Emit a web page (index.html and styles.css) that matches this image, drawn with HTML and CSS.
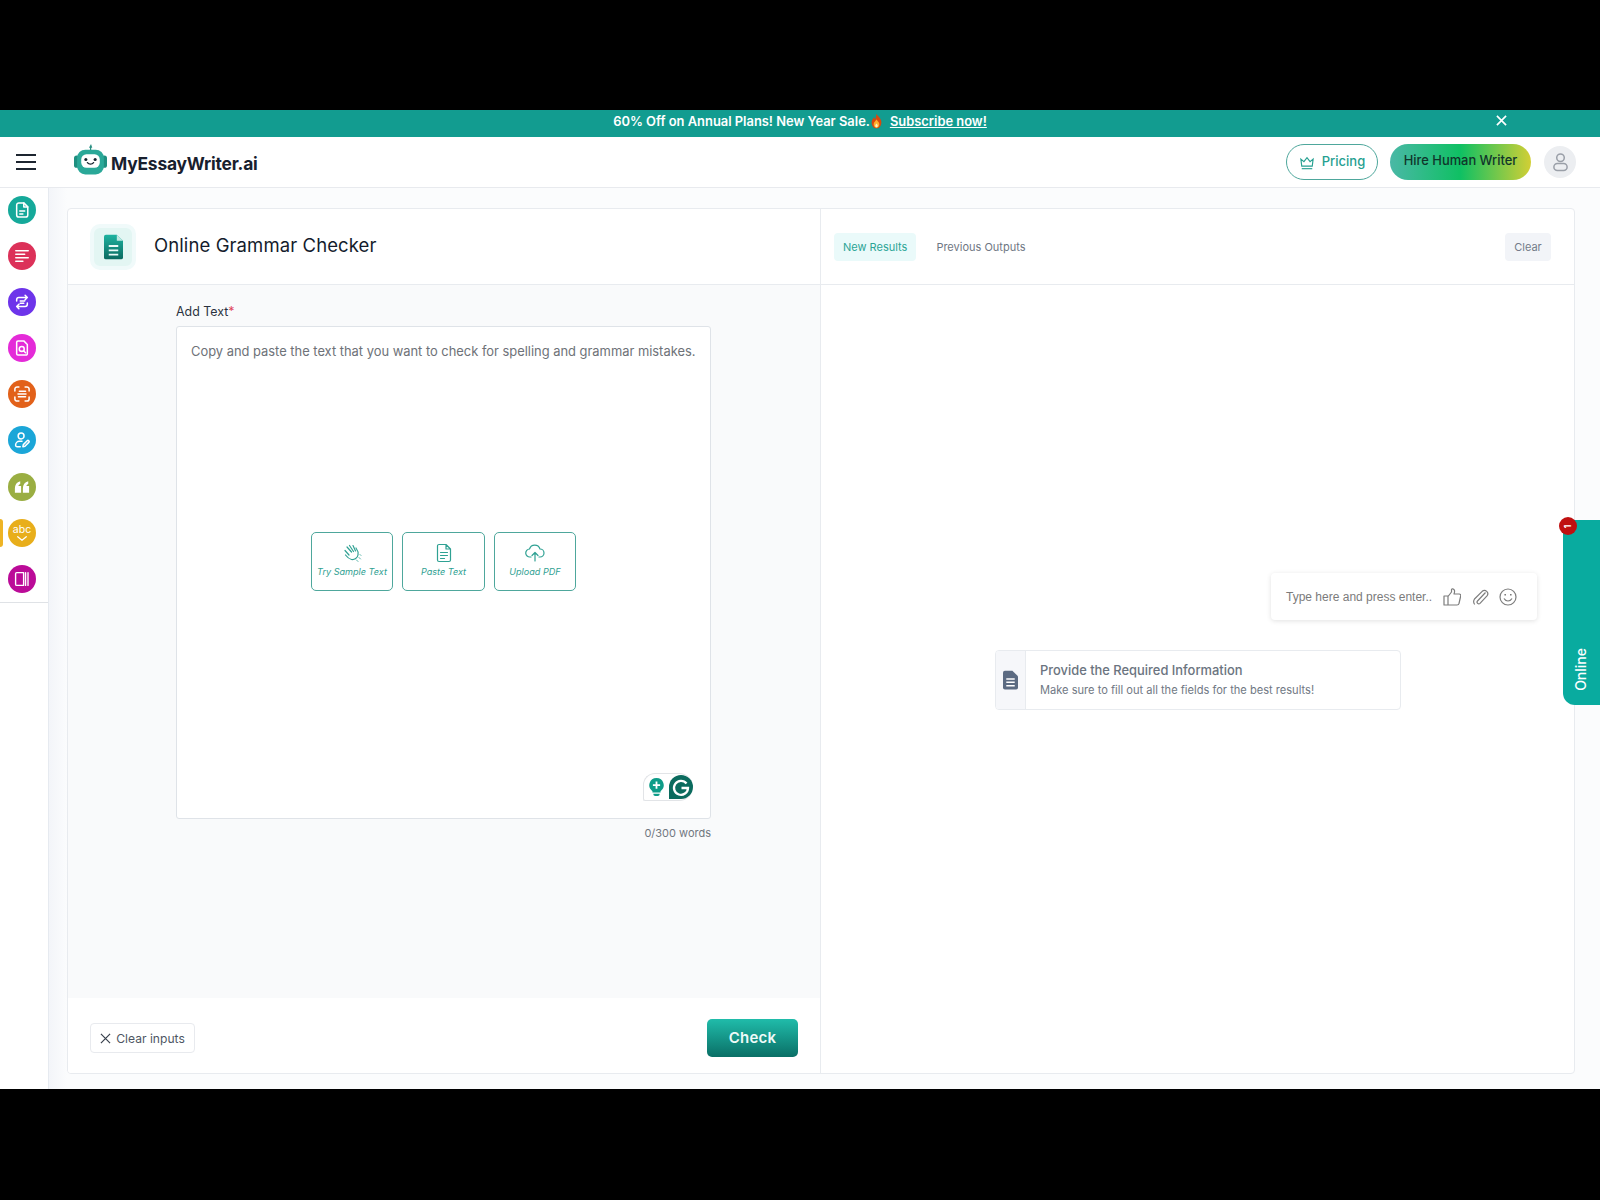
FILE: index.html
```html
<!DOCTYPE html>
<html lang="en">
<head>
  <meta charset="UTF-8">
  <title>Online Grammar Checker - MyEssayWriter.ai</title>
  <meta name="viewport" content="width=device-width, initial-scale=1.0">
  <link rel="stylesheet" href="styles.css">
</head>
<body>
  <div class="screen">
    <div class="promo-bar">
      <p class="promo-text">60% Off on Annual Plans! New Year Sale.<svg class="flame" viewBox="0 0 16 18"><path fill="#d9480f" d="M8 0c1 3 6 5 6 10.500C14 15 11.500 18 8 18s-6-3-6-7.500C2 7.500 4 6 5 4c.4 1.300 1 2.300 1.700 2.800C7.500 4.500 7.500 2 8 0z"/><path fill="#ffb02e" d="M8 7c1 2 3.500 3 3.500 6 0 2.300-1.500 4.200-3.500 4.200S4.500 15.300 4.500 13c0-3 2.500-4 3.500-6z"/><path fill="#fff3c4" d="M8 12c.5 1 1.500 1.500 1.500 2.700 0 1.200-.7 2-1.500 2s-1.500-.8-1.500-2C6.500 13.500 7.500 13 8 12z"/></svg><a class="promo-link" href="#">Subscribe now!</a></p>
      <svg class="promo-close" viewBox="0 0 12 12"><path d="M1 1l10 10M11 1L1 11"/></svg>
    </div>

    <header class="topbar">
      <div class="burger"><span></span><span></span><span></span></div>
      <div class="logo">
        <svg class="logo-mark" viewBox="0 0 32 30">
          <path fill="#2a8f82" d="M16.500 0l-2 3.500h1V6h1.200V3.500h1z"/>
          <rect x="0" y="11" width="5" height="12" rx="2.500" fill="#1f8f80"/>
          <rect x="27" y="11" width="5" height="12" rx="2.500" fill="#1f8f80"/>
          <rect x="3" y="5.500" width="26" height="24" rx="8" fill="#2aa898"/>
          <rect x="7" y="10" width="18" height="13" rx="5" fill="#fff"/>
          <circle cx="11.500" cy="15" r="1.500" fill="#16232e"/>
          <circle cx="20.500" cy="15" r="1.500" fill="#16232e"/>
          <path d="M13 18c1.500 2 4.500 2 6 0" fill="none" stroke="#16232e" stroke-width="1.300" stroke-linecap="round"/>
        </svg>
        <span class="logo-text">MyEssayWriter.ai</span>
      </div>
      <div class="topbar-right">
        <a class="pricing-btn" href="#">
          <svg viewBox="0 0 18 16" class="crown"><path d="M2 3.500l3.500 3L9 2l3.500 4.500 3.500-3-1 8H3z"/><path d="M3 14.500h12"/></svg>
          <span>Pricing</span>
        </a>
        <a class="hire-btn" href="#"><span>Hire Human Writer</span></a>
        <div class="avatar">
          <svg viewBox="0 0 18 20"><circle cx="9" cy="5.500" r="4"/><rect x="2" y="11.500" width="14" height="7.500" rx="3.700"/></svg>
        </div>
      </div>
    </header>

    <div class="body-row">
      <aside class="sidebar">
        <nav class="tool-list">
          <a class="tool tool-teal" href="#">
            <svg viewBox="0 0 16 18"><path d="M2 3.500A2.500 2.500 0 0 1 4.500 1H10l4.500 4.500v9A2.500 2.500 0 0 1 12 17H4.500A2.500 2.500 0 0 1 2 14.500z"/><path d="M10 1v4.500h4.500M5.500 10h5.500M5.500 13.500h3.500"/></svg>
          </a>
          <a class="tool tool-red" href="#">
            <svg viewBox="0 0 18 16"><path d="M2 2h14M2 6h10M2 10h14M2 14h8"/></svg>
          </a>
          <a class="tool tool-purple" href="#">
            <svg viewBox="0 0 18 18"><path d="M3 8V6.500A2.500 2.500 0 0 1 5.500 4H15M12.500 1.500L15 4l-2.500 2.500M15 10v1.500a2.500 2.500 0 0 1-2.500 2.500H3M5.500 11.500L3 14l2.500 2.500M7 8h5M7 10.500h4"/></svg>
          </a>
          <a class="tool tool-pink" href="#">
            <svg viewBox="0 0 16 18"><path d="M2 2.500A1.500 1.500 0 0 1 3.500 1H10l4 4v10.500a1.500 1.500 0 0 1-1.500 1.500h-9A1.500 1.500 0 0 1 2 15.500z"/><circle cx="7.700" cy="10" r="2.800"/><path d="M10 12.300l2 2"/></svg>
          </a>
          <a class="tool tool-orange" href="#">
            <svg viewBox="0 0 18 18"><path d="M1 5.500V3.500A2.500 2.500 0 0 1 3.500 1h2M12.500 1h2A2.500 2.500 0 0 1 17 3.500v2M17 12.500v2a2.500 2.500 0 0 1-2.500 2.500h-2M5.500 17h-2A2.500 2.500 0 0 1 1 14.500v-2M6 6h7M4.500 9h9M5 12h8"/></svg>
          </a>
          <a class="tool tool-blue" href="#">
            <svg viewBox="0 0 18 18"><circle cx="8" cy="4.500" r="3.300"/><path d="M9 10.500H6A4.200 4.200 0 0 0 1.800 14.700v.3a1.500 1.500 0 0 0 1.500 1.500H7M10 16.500l.5-2.300 4.300-4.300a1.200 1.200 0 0 1 1.800 1.800l-4.300 4.300z"/></svg>
          </a>
          <a class="tool tool-olive" href="#">
            <svg viewBox="0 0 18 14"><path class="solid" d="M1 8.500C1 4.500 3 1.500 7 .500v3C5.500 4 5 5 5 6h3v7.500H1zM10 8.500c0-4 2-7 6-8v3c-1.500.5-2 1.500-2 2.500h3v7.500h-7z"/></svg>
          </a>
          <a class="tool tool-yellow active" href="#">
            <span class="abc">abc</span>
            <svg class="abc-check" viewBox="0 0 14 7"><path d="M1 1l6 5 6-5"/></svg>
          </a>
          <a class="tool tool-magenta" href="#">
            <svg viewBox="0 0 20 18"><path d="M2 2.500A1.500 1.500 0 0 1 3.500 1H12v16H3.500A1.500 1.500 0 0 1 2 15.500zM14.500 1v16M17.500 1v16"/></svg>
          </a>
        </nav>
      </aside>

      <main class="main">
        <div class="panel">
          <section class="tool-pane">
            <div class="pane-head">
              <div class="title-icon">
                <svg viewBox="0 0 20 26">
                  <defs><linearGradient id="docfill" x1="0" y1="0" x2="0" y2="1"><stop offset="0" stop-color="#1eb3a0"/><stop offset="1" stop-color="#0b6a60"/></linearGradient></defs>
                  <path fill="url(#docfill)" d="M2 0h11.500L20 6.500V24a2 2 0 0 1-2 2H2a2 2 0 0 1-2-2V2a2 2 0 0 1 2-2z"/>
                  <path fill="#bfe9e2" d="M13.500 0L20 6.500h-6.500z"/>
                  <path stroke="#eafaf7" stroke-width="2" d="M5 12h10M5 16.500h10M5 21h10"/>
                </svg>
              </div>
              <h1 class="title">Online Grammar Checker</h1>
            </div>

            <div class="form-area">
              <div class="field">
                <label class="field-label">Add Text<span class="req">*</span></label>
                <div class="text-box">
                  <p class="placeholder">Copy and paste the text that you want to check for spelling and grammar mistakes.</p>
                  <div class="quick-actions">
                    <button class="quick-btn">
                      <svg viewBox="0 0 20 20"><path d="M5 4l4.500 5M7.500 2.500l4 6M11 2.500l2.500 5.500M3 7.500l4 4.500M14 5c1.500 2 2.500 4.500 2 7-.5 3-3.500 5-6.500 4.500C7 16 5 14 3.500 12"/><path class="thin" d="M17 14.500l1.500 1.500M14.500 17l1.500 1.500M18 11.500l1 1"/></svg>
                      Try Sample Text
                    </button>
                    <button class="quick-btn">
                      <svg viewBox="0 0 16 20"><path d="M1.500 3A1.500 1.500 0 0 1 3 1.500h7L14.500 6v11a1.500 1.500 0 0 1-1.500 1.500H3A1.500 1.500 0 0 1 1.500 17zM10 1.500V6h4.500M4.500 9.500h7M4.500 12.500h7M4.500 15.500h4"/></svg>
                      Paste Text
                    </button>
                    <button class="quick-btn">
                      <svg viewBox="0 0 20 18"><path d="M6 13H5A4 4 0 0 1 4.500 5 5.500 5.500 0 0 1 15 5a4 4 0 0 1 0 8h-1M10 17V9M7 11.500L10 8.500l3 3"/></svg>
                      Upload PDF
                    </button>
                  </div>
                  <div class="grammarly">
                    <svg class="g-bulb" viewBox="0 0 16 20"><path fill="#0e9c88" d="M8 0a8 8 0 0 1 4.500 14.600V16h-9v-1.400A8 8 0 0 1 8 0zM4.500 17.500h7V18a2 2 0 0 1-2 2h-3a2 2 0 0 1-2-2z"/><path fill="#fff" d="M7 4h2v3h3v2H9v3H7V9H4V7h3z"/></svg>
                    <svg class="g-mark" viewBox="0 0 24 24"><path fill="#0b6b5e" d="M12 0a12 12 0 1 1 0 24H0V12A12 12 0 0 1 12 0z"/><path fill="none" stroke="#fff" stroke-width="2.300" d="M17.500 8.500A7 7 0 1 0 19 13h-6.500"/></svg>
                  </div>
                </div>
                <div class="word-count">0/300 words</div>
              </div>
            </div>

            <div class="pane-foot">
              <button class="clear-inputs">
                <svg viewBox="0 0 12 12"><path d="M1 1l10 10M11 1L1 11"/></svg>
                Clear inputs
              </button>
              <button class="check-btn">Check</button>
            </div>
          </section>

          <section class="result-pane">
            <div class="result-head">
              <div class="tabs">
                <a class="tab tab-on" href="#">New Results</a>
                <a class="tab" href="#">Previous Outputs</a>
              </div>
              <button class="clear-btn">Clear</button>
            </div>
            <div class="result-body">
              <div class="notice">
                <div class="notice-icon">
                  <svg viewBox="0 0 16 20"><path fill="#5c6b82" d="M2 0h8l6 6v12a2 2 0 0 1-2 2H2a2 2 0 0 1-2-2V2a2 2 0 0 1 2-2z"/><path stroke="#fff" stroke-width="1.600" d="M3.500 9h9M3.500 12.500h9M3.500 16h9"/></svg>
                </div>
                <div class="notice-text">
                  <div class="notice-title">Provide the Required Information</div>
                  <div class="notice-sub">Make sure to fill out all the fields for the best results!</div>
                </div>
              </div>
            </div>
          </section>
        </div>
      </main>
    </div>

    <div class="chat-input">
      <span class="chat-ph">Type here and press enter..</span>
      <svg viewBox="0 0 18 18"><path d="M1 8h4v9H1zM5 8.500l3.500-4.500V1.500c0-1 2.500-1 3 1 .3 1.500-.5 3.500-.5 3.500h5.300c1 0 1.700 1 1.400 2l-1.700 7.500c-.2 1-1 1.500-2 1.500H5"/></svg>
      <svg viewBox="0 0 18 18"><path d="M14.500 4.500l-8 8.500a1.700 1.700 0 0 0 2.500 2.300l7-7.500a3.300 3.300 0 0 0-4.800-4.500L3.500 11a4.800 4.800 0 0 0 .2 5.500"/></svg>
      <svg viewBox="0 0 18 18"><circle cx="9" cy="9" r="8"/><path d="M5 10.500c1.800 3.300 6.200 3.300 8 0"/><path class="dots" d="M6.200 6v1.500M11.800 6v1.500"/></svg>
    </div>
    <div class="online-tab">
      <span class="online-badge"><span>1</span></span>
      <span class="online-label">Online</span>
    </div>
  </div>
</body>
</html>
```

FILE: styles.css
```css
* {
  margin: 0;
  padding: 0;
  box-sizing: border-box;
}
body {
  background: #000;
  font-family: Inter, "Liberation Sans", sans-serif;
  height: 1200px;
  overflow: hidden;
}
a {
  text-decoration: none;
  color: inherit;
}
button {
  font-family: inherit;
  cursor: pointer;
}
svg {
  display: block;
}

.screen {
  position: absolute;
  top: 110px;
  left: 0;
  width: 1600px;
  height: 979px;
  background: #fff;
  display: flex;
  flex-direction: column;
  overflow: hidden;
}

/* promo */
.promo-bar {
  height: 27px;
  flex-shrink: 0;
  padding-bottom: 5px;
  background: #129c90;
  color: #fff;
  display: flex;
  justify-content: center;
  align-items: center;
  position: relative;
}
.promo-text {
  font-size: 12.900px;
  font-weight: 600;
  display: flex;
  align-items: center;
  white-space: pre;
}
.flame {
  width: 13px;
  height: 16px;
  margin: 0 7px 0 0;
}
.promo-link {
  text-decoration: underline;
}
.promo-close {
  position: absolute;
  left: 1496px;
  top: 5px;
  width: 11px;
  height: 11px;
  fill: none;
  stroke: #fff;
  stroke-width: 1.8;
}

/* top bar */
.topbar {
  height: 51px;
  flex-shrink: 0;
  display: flex;
  align-items: center;
  padding: 0 24px 0 16px;
  background: #fff;
  border-bottom: 1px solid #e8eaee;
}
.burger {
  width: 20px;
  display: flex;
  flex-direction: column;
  gap: 5px;
  margin-right: 38px;
}
.burger span {
  height: 2px;
  background: #1d2530;
}
.logo {
  display: flex;
  align-items: center;
  gap: 4px;
}
.logo-mark {
  width: 33px;
  height: 31px;
  margin-top: -5px;
}
.logo-text {
  font-size: 17.400px;
  font-weight: 700;
  color: #18202e;
  letter-spacing: -0.2px;
  margin-top: 2px;
}
.topbar-right {
  margin-left: auto;
  display: flex;
  align-items: center;
}
.pricing-btn {
  width: 92px;
  height: 36px;
  border: 1px solid #4ea79c;
  border-radius: 18px;
  color: #25a091;
  font-size: 13px;
  font-weight: 500;
  display: flex;
  align-items: center;
  justify-content: center;
  gap: 7px;
  margin-right: 12px;
  padding-bottom: 2px;
}
.crown {
  width: 16px;
  height: 14px;
  margin-top: 3px;
  fill: none;
  stroke: #25a091;
  stroke-width: 1.3;
}
.hire-btn {
  width: 141px;
  height: 36px;
  padding-bottom: 3px;
  border-radius: 18px;
  background: linear-gradient(90deg, #4ab8a6 0%, #0fc063 50%, #d2cf35 100%);
  color: #10352b;
  font-size: 12.900px;
  font-weight: 500;
  display: flex;
  align-items: center;
  justify-content: center;
  margin-right: 13px;
}
.avatar {
  width: 32px;
  height: 32px;
  border-radius: 50%;
  background: #eceef1;
  display: flex;
  align-items: center;
  justify-content: center;
}
.avatar svg {
  width: 17px;
  height: 20px;
  fill: none;
  stroke: #9a9fa8;
  stroke-width: 1.600;
}

/* layout below the top bar */
.body-row {
  flex: 1;
  display: flex;
  min-height: 0;
}
.sidebar {
  width: 49px;
  flex-shrink: 0;
  background: #fff;
  border-right: 1px solid #e6eaf0;
}
.tool-list {
  height: 415px;
  padding-top: 8px;
  display: flex;
  flex-direction: column;
  gap: 18.100px;
  align-items: flex-start;
  border-bottom: 1px solid #dfe2e6;
}
.tool {
  width: 28px;
  height: 28px;
  margin-left: 8px;
  border-radius: 50%;
  display: flex;
  flex-direction: column;
  align-items: center;
  justify-content: center;
  flex-shrink: 0;
  position: relative;
}
.tool svg {
  width: 16px;
  height: 16px;
  fill: none;
  stroke: #fff;
  stroke-width: 1.700;
  stroke-linecap: round;
  stroke-linejoin: round;
}
.tool svg .solid {
  fill: #fff;
  stroke: none;
}
.tool-teal { background: #15a99a; }
.tool-red { background: #dc3159; }
.tool-purple { background: #6d34ea; }
.tool-pink { background: #e42bd8; }
.tool-orange { background: #e2611a; }
.tool-blue { background: #1ba6d8; }
.tool-olive { background: #9aae42; }
.tool-yellow { background: #e8ae1b; }
.tool-magenta { background: #bb0b98; }
.tool.active::before {
  content: "";
  position: absolute;
  left: -8px;
  top: 0;
  width: 3px;
  height: 28px;
  border-radius: 0 3px 3px 0;
  background: #eeb425;
}
.abc {
  color: #fff;
  font-size: 10.500px;
  line-height: 11px;
  margin-top: -1px;
}
.tool svg.abc-check {
  width: 10px;
  height: 5px;
  margin-top: 1px;
}

.main {
  flex: 1;
  min-width: 0;
  padding: 20px 25px 15px 18px;
  background: linear-gradient(90deg, #f3f5f9 0, #fbfcfd 18px);
}
.panel {
  height: 100%;
  background: #fff;
  border: 1px solid #e8ebef;
  border-radius: 4px;
  display: flex;
  overflow: hidden;
}

/* left pane */
.tool-pane {
  width: 753px;
  flex-shrink: 0;
  border-right: 1px solid #e8ebef;
  display: flex;
  flex-direction: column;
}
.pane-head {
  height: 76px;
  flex-shrink: 0;
  border-bottom: 1px solid #e8ebef;
  display: flex;
  align-items: center;
  padding-left: 22px;
}
.title-icon {
  width: 46px;
  height: 46px;
  border-radius: 10px;
  background: #e3f6f3;
  border: 4px solid #f0fafa;
  display: flex;
  align-items: center;
  justify-content: center;
  margin-right: 18px;
}
.title-icon svg {
  width: 19px;
  height: 26px;
}
.title {
  font-size: 18.500px;
  font-weight: 400;
  color: #141c2c;
  letter-spacing: 0.1px;
  margin-top: -3px;
}
.form-area {
  flex: 1;
  background: #f9fafb;
  padding: 19px 0 0 108px;
}
.field {
  width: 535px;
}
.field-label {
  display: block;
  font-size: 12.400px;
  line-height: 16px;
  color: #2a3240;
  margin-bottom: 6px;
}
.req {
  color: #e0455a;
}
.text-box {
  height: 493px;
  background: #fff;
  border: 1px solid #dfe3e8;
  border-radius: 3px;
  padding: 16px 14px;
  display: flex;
  flex-direction: column;
  position: relative;
}
.placeholder {
  font-size: 12.900px;
  line-height: 18px;
  color: #6e7278;
  white-space: nowrap;
}
.quick-actions {
  display: flex;
  justify-content: center;
  gap: 9px;
  margin-top: 171px;
}
.quick-btn {
  width: 82.500px;
  height: 59px;
  background: #fff;
  border: 1px solid #4ea79c;
  border-radius: 5px;
  color: #2fa193;
  font-size: 9.100px;
  font-style: italic;
  display: flex;
  flex-direction: column;
  align-items: center;
  justify-content: center;
  gap: 3px;
  padding-bottom: 3px;
}
.quick-btn svg {
  width: 20px;
  height: 20px;
  fill: none;
  stroke: #2fa193;
  stroke-width: 1.200;
  stroke-linecap: round;
  stroke-linejoin: round;
}
.quick-btn svg .thin {
  stroke-width: 0.800;
}
.grammarly {
  position: absolute;
  right: 17px;
  bottom: 17px;
  width: 50px;
  height: 28px;
  background: #fff;
  border: 1px solid #e2e4e7;
  border-right: 0;
  border-radius: 12px 14px 14px 2px;
  display: flex;
  align-items: center;
  justify-content: space-between;
  padding-left: 5px;
}
.g-bulb {
  width: 15px;
  height: 18px;
}
.g-mark {
  width: 24px;
  height: 24px;
}
.word-count {
  text-align: right;
  font-size: 11px;
  color: #71777f;
  margin-top: 7px;
}
.pane-foot {
  height: 75px;
  flex-shrink: 0;
  display: flex;
  align-items: center;
  justify-content: space-between;
  padding: 4px 22px 0 22px;
  background: #fff;
}
.clear-inputs {
  width: 105px;
  height: 30px;
  background: #fff;
  border: 1px solid #e8eaee;
  border-radius: 4px;
  color: #4e5663;
  font-size: 12.100px;
  display: flex;
  align-items: center;
  justify-content: center;
  gap: 5px;
  margin-top: 1px;
}
.clear-inputs svg {
  width: 11px;
  height: 11px;
  fill: none;
  stroke: #39414d;
  stroke-width: 1.300;
}
.check-btn {
  width: 91px;
  height: 38px;
  border: none;
  border-radius: 5px;
  background: linear-gradient(180deg, #20bcaa 0%, #0a6f66 100%);
  color: #eefaf8;
  font-size: 15px;
  font-weight: 600;
  letter-spacing: 0.2px;
}

/* right pane */
.result-pane {
  flex: 1;
  min-width: 0;
  display: flex;
  flex-direction: column;
}
.result-head {
  height: 76px;
  flex-shrink: 0;
  border-bottom: 1px solid #e8ebef;
  display: flex;
  align-items: center;
  justify-content: space-between;
  padding: 0 23px 0 13px;
}
.tabs {
  display: flex;
  gap: 2px;
}
.tab {
  height: 28px;
  padding: 0 9px;
  border-radius: 4px;
  font-size: 11px;
  color: #6f7783;
  display: flex;
  align-items: center;
  margin-right: 9px;
}
.tab-on {
  background: #eafafa;
  color: #2ba596;
}
.clear-btn {
  width: 46px;
  height: 28px;
  border: none;
  border-radius: 4px;
  background: #f2f4f8;
  color: #737b89;
  font-size: 11px;
}
.result-body {
  flex: 1;
  padding: 365px 0 0 174px;
}
.notice {
  width: 406px;
  height: 60px;
  border: 1px solid #e8ebef;
  border-radius: 4px;
  display: flex;
  overflow: hidden;
}
.notice-icon {
  width: 30px;
  background: #f6f7fa;
  border-right: 1px solid #e8ebef;
  display: flex;
  align-items: center;
  justify-content: center;
}
.notice-icon svg {
  width: 15px;
  height: 20px;
}
.notice-text {
  padding: 12px 0 0 14px;
}
.notice-title {
  font-size: 12.900px;
  font-weight: 500;
  color: #6b7480;
  line-height: 16px;
}
.notice-sub {
  font-size: 11.100px;
  color: #707884;
  line-height: 14px;
  margin-top: 4px;
}

/* chat widget sits over the page */
.chat-input {
  position: absolute;
  left: 1271px;
  top: 463px;
  width: 266px;
  height: 47px;
  background: #fff;
  border-radius: 4px;
  box-shadow: 0 1px 5px rgba(0, 0, 0, 0.12);
  display: flex;
  align-items: center;
  padding: 0 20px 0 15px;
}
.chat-ph {
  font-family: "Liberation Sans", sans-serif;
  font-size: 12px;
  color: #7b7b7b;
  margin-right: auto;
  white-space: nowrap;
}
.chat-input svg {
  width: 18px;
  height: 18px;
  margin-left: 10px;
  fill: none;
  stroke: #7d7d7d;
  stroke-width: 1.200;
  stroke-linejoin: round;
}
.chat-input .dots {
  stroke-width: 1.600;
}
.online-tab {
  position: absolute;
  left: 1563px;
  top: 410px;
  width: 37px;
  height: 185px;
  background: #09ab9f;
  border-radius: 12px 0 0 12px;
  display: flex;
  align-items: flex-end;
  justify-content: center;
  padding: 0 2px 14px 0;
}
.online-label {
  writing-mode: vertical-rl;
  transform: rotate(180deg);
  color: #fff;
  font-size: 14px;
  font-weight: 500;
}
.online-badge {
  position: absolute;
  left: -4px;
  top: -3px;
  width: 18px;
  height: 18px;
  border-radius: 50%;
  background: #c01010;
  color: #fff;
  font-size: 9px;
  font-weight: 700;
  display: flex;
  align-items: center;
  justify-content: center;
}
.online-badge span {
  transform: rotate(-90deg);
}
```
